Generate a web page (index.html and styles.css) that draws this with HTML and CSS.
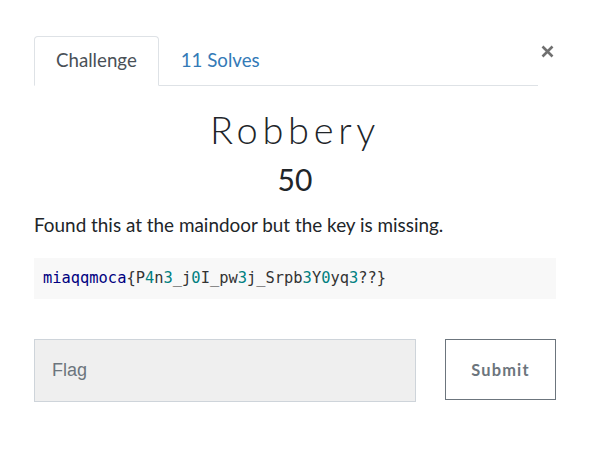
FILE: index.html
```html
<!DOCTYPE html>
<html>
<head>
<meta charset="utf-8">
<link rel="stylesheet" href="styles.css">
</head>
<body>
<div class="modal">
  <div class="nav-row">
    <ul class="tabs">
      <li class="tab active">Challenge</li>
      <li class="tab link">11 Solves</li>
    </ul>
    <button class="close" aria-label="Close">
      <svg width="13" height="13" viewBox="0 0 13 13"><path d="M1.5 1.5 L11.5 11.5 M11.5 1.5 L1.5 11.5" stroke="#707070" stroke-width="2.6" stroke-linecap="butt"/></svg>
    </button>
  </div>
  <h2 class="title">Robbery</h2>
  <h3 class="value">50</h3>
  <p class="desc">Found this at the maindoor but the key is missing.</p>
  <pre class="code"><span class="kw">miaqqmoca</span>{P<span class="n">4</span>n<span class="n">3</span>_j<span class="n">0</span>I_pw<span class="n">3</span>j_Srpb<span class="n">3</span>Y<span class="n">0</span>yq<span class="n">3</span>??}</pre>
  <div class="form-row">
    <input class="flag" type="text" placeholder="Flag">
    <button class="submit">Submit</button>
  </div>
</div>
</body>
</html>
```

FILE: styles.css
```css
* { box-sizing: border-box; }
html, body { margin: 0; padding: 0; background: #fff; }
body { font-family: "Lato", sans-serif; color: #212529; }
.modal { padding: 36px 34px 0 34px; width: 590px; }
.nav-row { display: flex; align-items: flex-start; }
.tabs { display: flex; list-style: none; margin: 0; padding: 0; flex: 1; border-bottom: 1px solid #dee2e6; }
.tab { font-size: 18.7px; line-height: 27px; padding: 10px 21px 11px 21px; margin-bottom: -1px; border: 1px solid transparent; border-radius: 4px 4px 0 0; }
.tab.active { color: #495057; border-color: #dee2e6 #dee2e6 #fff; background: #fff; }
.tab.link { color: #337ab7; }
.close { width: 18px; height: 30px; margin-top: 0; padding: 0; border: 0; background: transparent; display: flex; align-items: center; justify-content: center; }
.title { font-family: "Lato", sans-serif; font-weight: 300; font-size: 38px; letter-spacing: 4.7px; text-align: center; margin: 21px 0 0 0; line-height: 44px; color: #212529; }
.value { font-weight: 400; font-size: 30px; text-align: center; margin: 10px 0 0 0; line-height: 36px; color: #212529; }
.desc { font-size: 18.9px; margin: 14px 0 0 0; line-height: 27px; color: #212529; }
.code { font-family: "DejaVu Sans Mono", monospace; font-size: 15.4px; line-height: 22px; background: #f8f8f8; margin: 20px 0 0 0; padding: 9px 9px 10px 9px; color: #333; }
.code .kw { color: #000080; }
.code .n { color: #008080; }
.form-row { display: flex; gap: 29px; margin-top: 40px; }
.flag { width: 382px; height: 63px; background: #efefef; border: 1px solid #ced4da; padding: 0 17px; font-family: "Liberation Sans", sans-serif; font-size: 18px; color: #495057; outline: none; }
.flag::placeholder { color: #6c757d; }
.submit { width: 111px; height: 61px; background: #fff; border: 1px solid #6c757d; color: #6c757d; font-family: "Lato", sans-serif; font-weight: 700; font-size: 16.4px; letter-spacing: 1.2px; padding: 0; }
```
